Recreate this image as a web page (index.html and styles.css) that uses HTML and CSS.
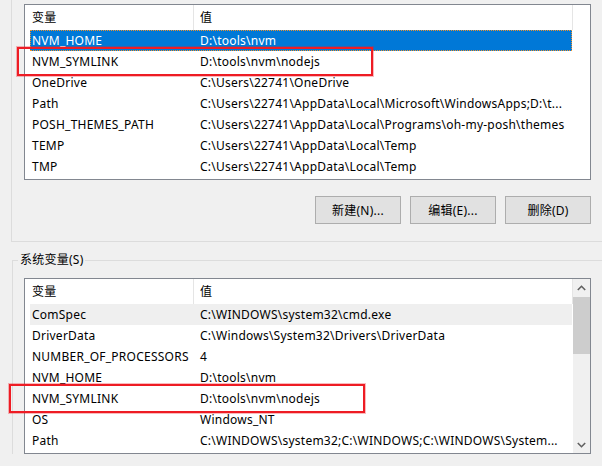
FILE: index.html
```html
<!DOCTYPE html>
<html lang="zh-CN">
<head>
<meta charset="utf-8">
<title>环境变量</title>
<link rel="stylesheet" href="styles.css">
</head>
<body>
<div class="page">
  <div class="group user-group">
    <div class="listview">
      <div class="lv-main">
        <div class="lv-header">
          <div class="hcell hname">变量</div>
          <div class="hcell hvalue">值</div>
        </div>
        <div class="row selected"><span class="cell name">NVM_HOME</span><span class="cell value">D:\tools\nvm</span></div>
        <div class="row"><span class="cell name">NVM_SYMLINK</span><span class="cell value">D:\tools\nvm\nodejs</span></div>
        <div class="row"><span class="cell name">OneDrive</span><span class="cell value">C:\Users\22741\OneDrive</span></div>
        <div class="row"><span class="cell name">Path</span><span class="cell value">C:\Users\22741\AppData\Local\Microsoft\WindowsApps;D:\t...</span></div>
        <div class="row"><span class="cell name">POSH_THEMES_PATH</span><span class="cell value">C:\Users\22741\AppData\Local\Programs\oh-my-posh\themes</span></div>
        <div class="row"><span class="cell name">TEMP</span><span class="cell value">C:\Users\22741\AppData\Local\Temp</span></div>
        <div class="row"><span class="cell name">TMP</span><span class="cell value">C:\Users\22741\AppData\Local\Temp</span></div>
      </div>
    </div>
    <div class="buttons">
      <button class="btn">新建(N)...</button>
      <button class="btn">编辑(E)...</button>
      <button class="btn">删除(D)</button>
    </div>
  </div>

  <fieldset class="sys-group">
    <legend class="legend">系统变量(S)</legend>
    <div class="listview">
      <div class="lv-main">
        <div class="lv-header">
          <div class="hcell hname">变量</div>
          <div class="hcell hvalue">值</div>
        </div>
        <div class="row hot"><span class="cell name">ComSpec</span><span class="cell value">C:\WINDOWS\system32\cmd.exe</span></div>
        <div class="row"><span class="cell name">DriverData</span><span class="cell value">C:\Windows\System32\Drivers\DriverData</span></div>
        <div class="row"><span class="cell name">NUMBER_OF_PROCESSORS</span><span class="cell value">4</span></div>
        <div class="row"><span class="cell name">NVM_HOME</span><span class="cell value">D:\tools\nvm</span></div>
        <div class="row"><span class="cell name">NVM_SYMLINK</span><span class="cell value">D:\tools\nvm\nodejs</span></div>
        <div class="row"><span class="cell name">OS</span><span class="cell value">Windows_NT</span></div>
        <div class="row"><span class="cell name">Path</span><span class="cell value">C:\WINDOWS\system32;C:\WINDOWS;C:\WINDOWS\System...</span></div>
      </div>
      <div class="scrollbar">
        <div class="sb-arrow">
          <svg width="9" height="6" viewBox="0 0 9 6"><polyline points="0.8,5 4.5,1.3 8.2,5" fill="none" stroke="#606060" stroke-width="1.6"/></svg>
        </div>
        <div class="sb-track">
          <div class="sb-thumb"></div>
        </div>
        <div class="sb-arrow">
          <svg width="9" height="6" viewBox="0 0 9 6"><polyline points="0.8,1 4.5,4.7 8.2,1" fill="none" stroke="#606060" stroke-width="1.6"/></svg>
        </div>
      </div>
    </div>
  </fieldset>

  <div class="annot annot-user"></div>
  <div class="annot annot-sys"></div>
</div>
</body>
</html>
```

FILE: styles.css
```css
html, body {
  margin: 0;
  padding: 0;
  background: #f0f0f0;
  overflow: hidden;
}

body {
  font-family: "Noto Sans", "Noto Sans CJK SC", sans-serif;
  font-size: 12px;
  letter-spacing: 0.24px;
  color: #000;
}

.page {
  position: relative;
  width: 602px;
  height: 466px;
  padding-left: 11px;
  box-sizing: border-box;
}

.user-group {
  border-left: 1px solid #dcdcdc;
  border-bottom: 1px solid #dcdcdc;
  padding: 4px 0 17px 12px;
}

.listview {
  display: flex;
  width: 567px;
  height: 176px;
  box-sizing: border-box;
  border: 1px solid #828790;
  background: #fff;
}

.lv-main {
  width: 548px;
}

.lv-header {
  display: flex;
  height: 25px;
  line-height: 25px;
}

.hcell {
  box-sizing: border-box;
  border-right: 1px solid #e5e5e5;
  white-space: nowrap;
}

.hname {
  width: 169px;
  padding-left: 7px;
}

.hvalue {
  width: 379px;
  padding-left: 6px;
}

.row {
  display: grid;
  grid-template-columns: 164px 1fr;
  width: 542px;
  height: 21px;
  line-height: 21px;
  margin-left: 5px;
  white-space: nowrap;
}

.cell {
  overflow: hidden;
}

.name {
  padding-left: 2px;
}

.value {
  padding-left: 6px;
}

.row.selected {
  background: #0078d7;
  color: #fff;
  outline: 1px dotted #f0922b;
  outline-offset: -1px;
}

.row.hot {
  background: #efefef;
}

.buttons {
  display: flex;
  justify-content: flex-end;
  gap: 9px;
  width: 567px;
  margin-top: 16px;
}

.btn {
  width: 86px;
  height: 28px;
  padding: 0;
  border: 1px solid #adadad;
  background: #e1e1e1;
  font: inherit;
  letter-spacing: inherit;
  color: #000;
}

.sys-group {
  margin: 10px 0 0 1px;
  padding: 10px 0 0 5px;
  min-inline-size: 0;
  border: 1px solid #dcdcdc;
  border-right: none;
  border-bottom: none;
}

.legend {
  padding: 0 2px;
  line-height: 16px;
}

.sys-group .listview {
  margin-left: 6px;
}

.scrollbar {
  width: 17px;
  display: flex;
  flex-direction: column;
  background: #f0f0f0;
}

.sb-arrow {
  height: 17px;
  display: flex;
  align-items: center;
  justify-content: center;
}

.sb-track {
  flex: 1;
}

.sb-thumb {
  height: 57px;
  margin: 1px 0 0 0;
  background: #cdcdcd;
}

.annot {
  position: absolute;
  box-sizing: border-box;
  border: 2px solid #ee1c24;
  box-shadow: 0 0 0 1px rgba(238, 28, 36, 0.3);
}

.annot-user {
  left: 17px;
  top: 47px;
  width: 356px;
  height: 29px;
}

.annot-sys {
  left: 9px;
  top: 384px;
  width: 356px;
  height: 29px;
}
```
